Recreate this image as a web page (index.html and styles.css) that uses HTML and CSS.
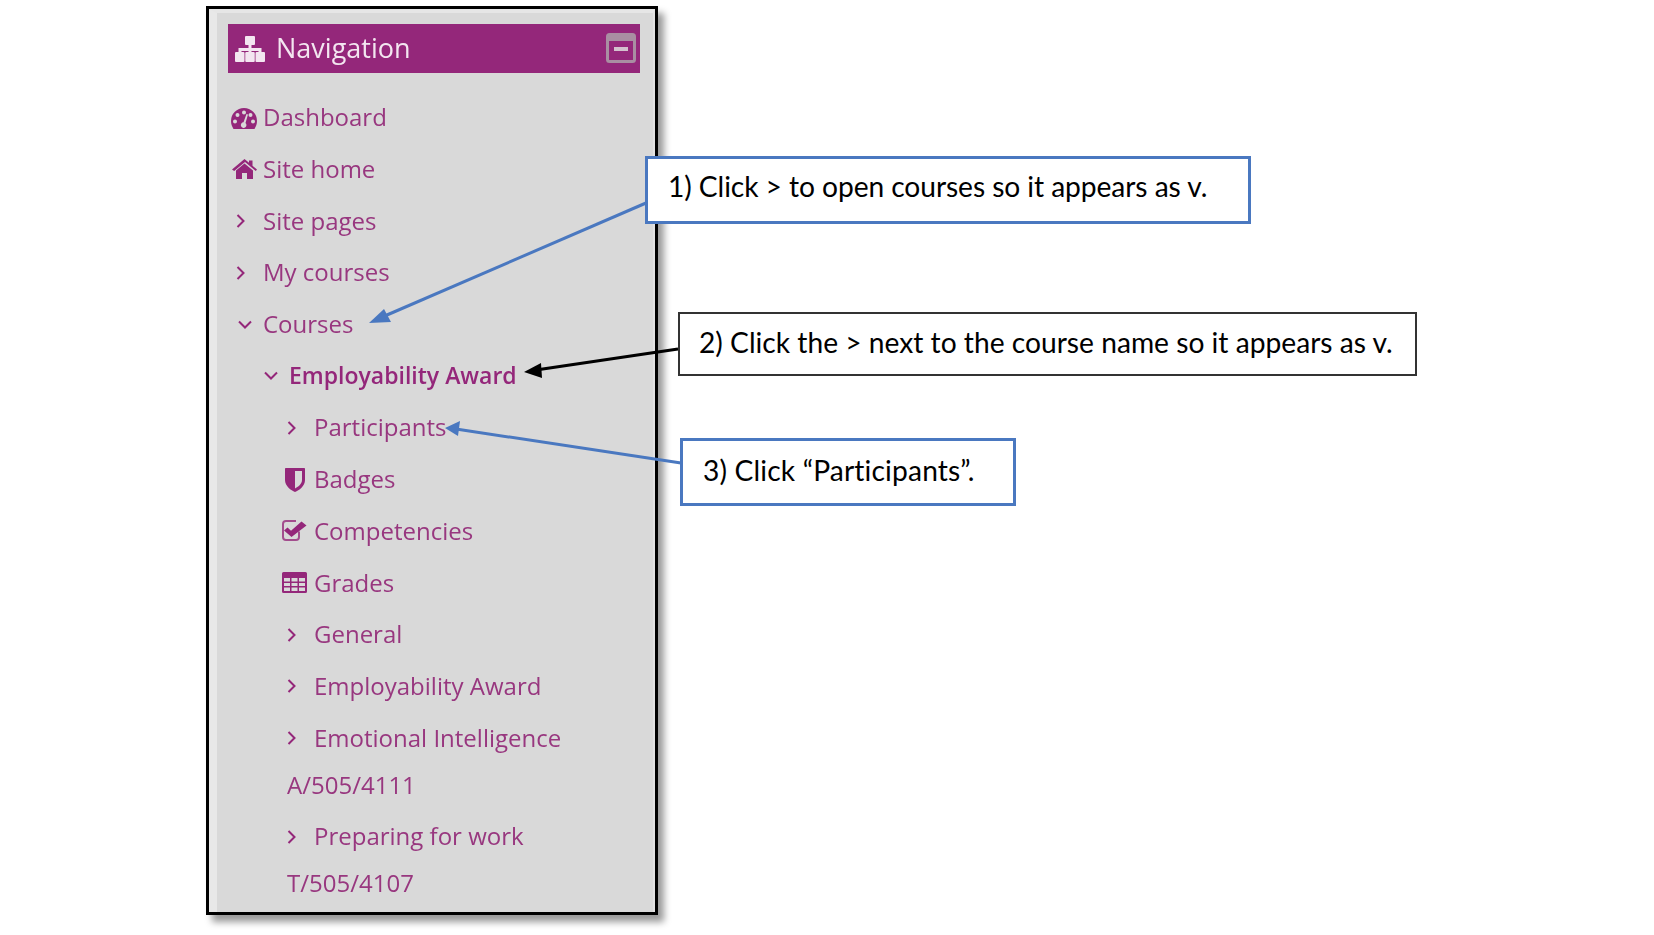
FILE: index.html
```html
<!DOCTYPE html>
<html lang="en">
<head>
  <meta charset="UTF-8" />
  <meta name="viewport" content="width=device-width, initial-scale=1.0" />
  <title>Navigation help</title>
  <link rel="stylesheet" href="styles.css">
</head>
<body>
  <div class="page">
    <div class="panel">
      <div class="panel-inner">
        <div class="nav-header">
          <svg class="header-icon" viewBox="0 0 30 26">
            <rect x="10" y="0" width="10" height="9" rx="1" />
            <rect x="0" y="16" width="9.500" height="10" rx="1" />
            <rect x="10.250" y="16" width="9.500" height="10" rx="1" />
            <rect x="20.500" y="16" width="9.500" height="10" rx="1" />
            <path d="M13.500 8h3v4h10v5h-3v-2h-7v2h-3v-2h-7v2h-3v-5h10z" />
          </svg>
          <span class="nav-title">Navigation</span>
          <svg class="collapse-icon" viewBox="0 0 30 30">
            <rect x="1.500" y="1.500" width="27" height="27" rx="2" fill="none" stroke="#a98ea2" stroke-width="3" />
            <rect x="2" y="2" width="26" height="6" fill="#a98ea2" />
            <rect x="8" y="14" width="14" height="4" fill="#d3c1ce" />
          </svg>
        </div>

        <ul class="nav-list">
          <li class="nav-item">
            <span class="slot">
              <svg class="icon icon-dash" viewBox="0 0 26 21">
                <path fill-rule="evenodd" d="M13 0a13 13 0 0 1 13 13c0 3-1 5.500-2.500 8h-21C1 18.500 0 16 0 13A13 13 0 0 1 13 0zM13 2.500a2 2 0 1 0 0 4 2 2 0 0 0 0-4zM6.500 5a2 2 0 1 0 0 4 2 2 0 0 0 0-4zM19.500 5a2 2 0 1 0 0 4 2 2 0 0 0 0-4zM4 11.500a2 2 0 1 0 0 4 2 2 0 0 0 0-4zM22 11.500a2 2 0 1 0 0 4 2 2 0 0 0 0-4zM15.500 6l-3 8.300a2.800 2.800 0 1 0 2 .700l2.500-8.500z" />
              </svg>
            </span>Dashboard
          </li>
          <li class="nav-item">
            <span class="slot">
              <svg class="icon icon-home" viewBox="0 0 25 20">
                <path d="M12.500 0l4.500 3.800V1.500h3.500v5.200l4.500 3.800-1.200 1.400-10.800-9-10.800 9L0 10.500z" />
                <path d="M12.500 4.500l8.500 7V20h-6v-6h-5v6H4v-8.500z" />
              </svg>
            </span>Site home
          </li>
          <li class="nav-item">
            <span class="slot"><svg class="chev" viewBox="0 0 10 16"><path d="M1.500 2l6 6-6 6" /></svg></span>Site pages
          </li>
          <li class="nav-item">
            <span class="slot"><svg class="chev" viewBox="0 0 10 16"><path d="M1.500 2l6 6-6 6" /></svg></span>My courses
          </li>
          <li class="nav-item">
            <span class="slot"><svg class="chev-down" viewBox="0 0 16 10"><path d="M2 1.500l6 6 6-6" /></svg></span>Courses
          </li>
          <li class="nav-item level-1 current">
            <span class="slot"><svg class="chev-down" viewBox="0 0 16 10"><path d="M2 1.500l6 6 6-6" /></svg></span>Employability Award
          </li>
          <li class="nav-item level-2">
            <span class="slot"><svg class="chev" viewBox="0 0 10 16"><path d="M1.500 2l6 6-6 6" /></svg></span>Participants
          </li>
          <li class="nav-item level-2">
            <span class="slot">
              <svg class="icon icon-shield" viewBox="0 0 20 24">
                <path fill-rule="evenodd" d="M1 0h18c.600 0 1 .400 1 1v11c0 6-6 10.500-10 12C6 22.500 0 18 0 12V1c0-.600.400-1 1-1zM10 3v17.500c3-1.500 7-4.500 7-8.500V3z" />
              </svg>
            </span>Badges
          </li>
          <li class="nav-item level-2">
            <span class="slot">
              <svg class="icon icon-check" viewBox="0 0 25 21">
                <path fill="none" stroke-width="2" d="M17 11.500V17a3 3 0 0 1-3 3H4a3 3 0 0 1-3-3V4a3 3 0 0 1 3-3h10" />
                <path d="M5.500 7.500l3.500 3.300L19.500 1.500 24.500 5.500 9.500 17 2 10.500z" />
              </svg>
            </span>Competencies
          </li>
          <li class="nav-item level-2">
            <span class="slot">
              <svg class="icon icon-table" viewBox="0 0 25 21">
                <path fill-rule="evenodd" d="M1.500 0h22A1.500 1.500 0 0 1 25 1.500v18a1.500 1.500 0 0 1-1.500 1.500h-22A1.500 1.500 0 0 1 0 19.500v-18A1.500 1.500 0 0 1 1.500 0zM2 6v3.500h6V6zM9.500 6v3.500h6V6zM17 6v3.500h6V6zM2 11v3h6v-3zM9.500 11v3h6v-3zM17 11v3h6v-3zM2 15.500V19h6v-3.500zM9.500 15.500V19h6v-3.500zM17 15.500V19h6v-3.500z" />
              </svg>
            </span>Grades
          </li>
          <li class="nav-item level-2">
            <span class="slot"><svg class="chev" viewBox="0 0 10 16"><path d="M1.500 2l6 6-6 6" /></svg></span>General
          </li>
          <li class="nav-item level-2">
            <span class="slot"><svg class="chev" viewBox="0 0 10 16"><path d="M1.500 2l6 6-6 6" /></svg></span>Employability Award
          </li>
          <li class="nav-item level-2">
            <span class="slot"><svg class="chev" viewBox="0 0 10 16"><path d="M1.500 2l6 6-6 6" /></svg></span>Emotional Intelligence A/505/4111
          </li>
          <li class="nav-item level-2">
            <span class="slot"><svg class="chev" viewBox="0 0 10 16"><path d="M1.500 2l6 6-6 6" /></svg></span>Preparing for work T/505/4107
          </li>
        </ul>
      </div>
    </div>

    <!-- arrows and callouts sit on top of the panel -->
    <svg class="arrows" viewBox="0 0 1654 935">
      <line x1="646" y1="203" x2="380" y2="318" stroke="#4a78c0" stroke-width="3" />
      <polygon points="369,323 384,309 391,322" fill="#4a78c0" />
      <line x1="678" y1="349" x2="536" y2="370" stroke="#000" stroke-width="3" />
      <polygon points="524,372 541,363 542,378" fill="#000" />
      <line x1="681" y1="463" x2="456" y2="429" stroke="#4a78c0" stroke-width="3" />
      <polygon points="445,428 460,421 458,436" fill="#4a78c0" />
    </svg>

    <div class="callout callout-1">1) Click &gt; to open courses so it appears as v.</div>
    <div class="callout callout-2">2) Click the &gt; next to the course name so it appears as v.</div>
    <div class="callout callout-3">3) Click “Participants”.</div>
  </div>
</body>
</html>
```

FILE: styles.css
```css
body {
  margin: 0;
  background-color: white;
  font-family: "Open Sans", sans-serif;
}
.page {
  position: relative;
  width: 1654px;
  height: 935px;
  overflow: hidden;
}
.panel {
  box-sizing: border-box;
  width: 452px;
  height: 909px;
  margin-left: 206px;
  position: relative;
  top: 6px;
  border: 3px solid #000;
  background-color: #d9d9d9;
  box-shadow: 6px 7px 7px rgba(0, 0, 0, 0.4);
}
.panel-inner {
  height: 100%;
  box-sizing: border-box;
  padding: 11px 13px 0 11px;
  border-left: 8px solid #e8e8e8;
  border-top: 4px solid #e6e6e6;
  border-right: 2px solid #e2e2e2;
}
.nav-header {
  display: flex;
  align-items: center;
  height: 49px;
  padding: 0 4px 0 7px;
  background-color: #94277a;
  color: #f3e6f0;
}
.header-icon {
  width: 30px;
  height: 26px;
  fill: #f3e6f0;
  filter: blur(0.6px);
}
.nav-title {
  margin-left: 11px;
  margin-top: -2px;
  font-size: 27px;
  filter: blur(0.4px);
}
.collapse-icon {
  width: 30px;
  height: 30px;
  margin-left: auto;
  margin-top: -2px;
  filter: blur(0.6px);
}
.nav-list {
  list-style: none;
  margin: 18px 0 0;
  padding: 0;
  color: #98377f;
  font-size: 24px;
  line-height: 47px;
  filter: blur(0.5px);
}
.nav-item {
  padding: 2.350px 0 2.350px 8px;
}
.level-1 {
  padding-left: 34px;
}
.level-2 {
  padding-left: 59px;
}
.current {
  font-weight: 600;
  font-size: 23px;
  color: #94277a;
}
.slot {
  display: inline-block;
  width: 27px;
  height: 26px;
  vertical-align: middle;
  position: relative;
  top: -2px;
}
.slot svg {
  display: block;
  overflow: visible;
}
.chev, .chev-down {
  fill: none;
  stroke: #94277a;
  stroke-width: 2;
}
.chev {
  width: 10px;
  height: 16px;
  margin: 5px 0 0;
}
.chev-down {
  width: 16px;
  height: 10px;
  margin: 8px 0 0 1px;
}
.icon {
  fill: #94277a;
  stroke: none;
}
.icon-dash {
  width: 26px;
  height: 21px;
  margin: 3px 0 0 -5px;
}
.icon-home {
  width: 25px;
  height: 20px;
  margin: 2px 0 0 -4px;
}
.icon-shield {
  width: 20px;
  height: 24px;
  margin: 1px 0 0 -2px;
}
.icon-check {
  width: 25px;
  height: 21px;
  margin: 2px 0 0 -5px;
}
.icon-check path:first-child {
  stroke: #a34d8d;
}
.icon-table {
  width: 25px;
  height: 21px;
  margin: 2px 0 0 -5px;
}
.arrows {
  position: absolute;
  left: 0;
  top: 0;
  width: 1654px;
  height: 935px;
}
.callout {
  position: absolute;
  box-sizing: border-box;
  display: flex;
  align-items: center;
  background-color: white;
  border: 3px solid #4a78c0;
  font-family: Lato, sans-serif;
  font-size: 28.200px;
  color: #000;
  white-space: nowrap;
}
.callout-1 {
  left: 645px;
  top: 156px;
  width: 606px;
  height: 68px;
  padding: 0 0 8px 20px;
  letter-spacing: -0.080px;
}
.callout-2 {
  left: 678px;
  top: 312px;
  width: 739px;
  height: 64px;
  padding: 0 0 4px 19px;
  border: 2px solid #333;
}
.callout-3 {
  left: 680px;
  top: 438px;
  width: 336px;
  height: 68px;
  padding: 0 0 4px 20px;
  letter-spacing: 0.150px;
}
```
